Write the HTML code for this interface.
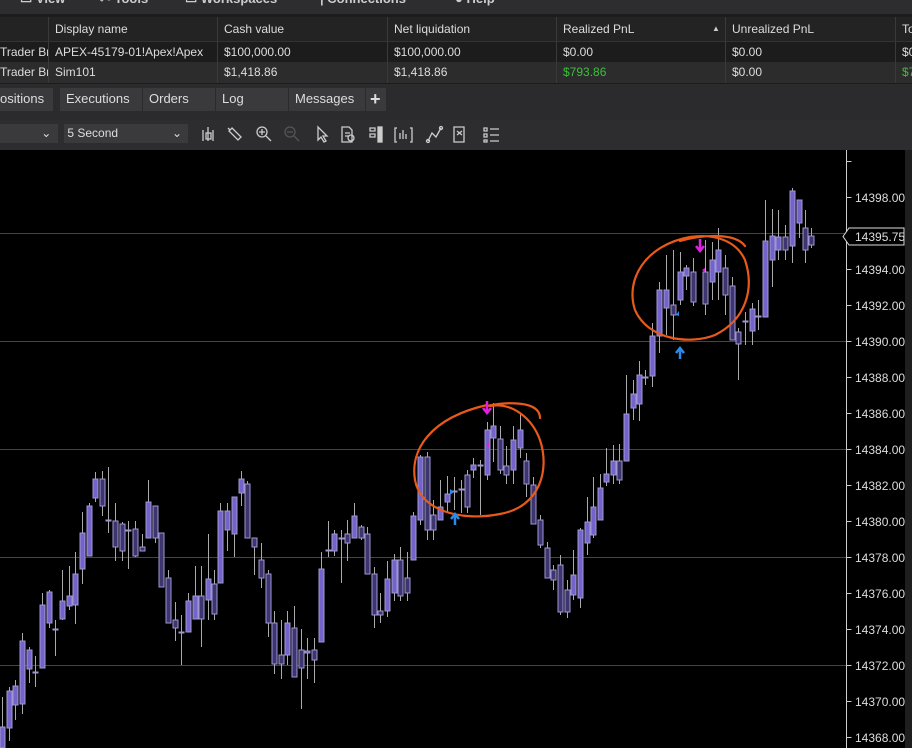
<!DOCTYPE html>
<html><head><meta charset="utf-8"><style>
body{margin:0;width:912px;height:748px;overflow:hidden;background:#000;font-family:"Liberation Sans",sans-serif;position:relative}
.a{position:absolute}
.menu{left:0;top:0;width:912px;height:14px;background:#2d2d30;overflow:hidden}
.menu span{position:absolute;top:-9px;font-size:13px;color:#ccc;font-weight:bold}
.tbl{left:0;top:14px;width:912px;height:70px;background:#1c1c1c}
.row{position:absolute;left:0;width:912px;height:21px;font-size:12px;color:#ddd;line-height:21px}
.row span{position:absolute;padding-left:6px;white-space:nowrap;overflow:hidden;border-left:1px solid #3a3a3a;height:100%}
.tabs{left:0;top:84px;width:912px;height:36px;background:#2b2b2d}
.tab{position:absolute;top:4px;height:23px;background:#3a3a3c;color:#ddd;font-size:13px;line-height:22px;padding-left:6px}
.tool{left:0;top:120px;width:912px;height:30px;background:#2d2d30}
</style></head><body>
<div class="a menu"><span style="left:20px">▭ View</span><span style="left:100px">✂ Tools</span><span style="left:185px">▭ Workspaces</span><span style="left:320px">| Connections</span><span style="left:455px">● Help</span></div>
<div class="a tbl">
 <div class="row" style="top:3px;height:24px;line-height:24px;background:#232323">
  <span style="left:48px;width:163px">Display name</span><span style="left:217px;width:163px">Cash value</span><span style="left:387px;width:163px">Net liquidation</span><span style="left:556px;width:163px">Realized PnL<b style="position:absolute;left:155px;font-size:8px;color:#ccc">▲</b></span><span style="left:725px;width:163px">Unrealized PnL</span><span style="left:895px;width:20px">To</span>
 </div>
 <div class="row" style="top:27px;border-top:1px solid #333">
  <span style="left:-6px;width:48px;border:0">Trader Br</span><span style="left:48px;width:163px">APEX-45179-01!Apex!Apex</span><span style="left:217px;width:163px">$100,000.00</span><span style="left:387px;width:163px">$100,000.00</span><span style="left:556px;width:163px">$0.00</span><span style="left:725px;width:163px">$0.00</span><span style="left:895px">$0</span>
 </div>
 <div class="row" style="top:48px;background:#2c2c2c">
  <span style="left:-6px;width:48px;border:0">Trader Br</span><span style="left:48px;width:163px">Sim101</span><span style="left:217px;width:163px">$1,418.86</span><span style="left:387px;width:163px">$1,418.86</span><span style="left:556px;width:163px;color:#3cbf3c">$793.86</span><span style="left:725px;width:163px">$0.00</span><span style="left:895px;color:#3cbf3c">$7</span>
 </div>
</div>
<div class="a tabs">
 <div class="tab" style="left:-6px;width:53px">ositions</div>
 <div class="tab" style="left:60px;width:76px">Executions</div>
 <div class="tab" style="left:143px;width:66px">Orders</div>
 <div class="tab" style="left:216px;width:66px">Log</div>
 <div class="tab" style="left:289px;width:70px">Messages</div>
 <div class="tab" style="left:366px;width:16px;padding-left:4px;font-size:18px;font-weight:bold">+</div>
</div>
<div class="a tool">
 <div class="a" style="left:0;top:4px;width:58px;height:19px;background:#3a3a3c;color:#ddd;font-size:12px;text-align:right;line-height:19px">⌄&nbsp;&nbsp;</div>
 <div class="a" style="left:64px;top:4px;width:124px;height:19px;background:#3a3a3c;color:#ddd;font-size:12px;line-height:19px">&nbsp;5 Second<span style="position:absolute;right:6px">⌄</span></div>
 <svg class="a" style="left:198px;top:4px" width="305" height="22" fill="none" stroke="#ccc" stroke-width="1.3">
  <path d="M5 6v11M10 3v14M15 6v11M8 9h5v6H8z" /><path d="M34 4l9 9-3 3-9-9zM32 6l-2-2" />
  <circle cx="64" cy="8" r="5"/><path d="M68 12l5 5M61 8h6M64 5v6"/>
  <g stroke="#555"><circle cx="92" cy="8" r="5"/><path d="M96 12l5 5M89 8h6"/></g>
  <path d="M120 3v13l3-3 3 5 2-1-3-5h4z"/>
  <path d="M144 3h7l3 3v12h-10z M147 9h5M147 12h4"/><circle cx="153" cy="14" r="3"/>
  <path d="M172 4h5v3h-5zM172 10h5v3h-5z"/><rect x="180" y="3" width="4" height="15" fill="#ccc"/>
  <path d="M199 4h-2v14h2M212 4h2v14h-2M202 15v-6M205 15v-9M208 15v-5"/>
  <path d="M230 17l4-8 4 4 5-9" /><circle cx="230" cy="17" r="1.5"/><circle cx="243" cy="4" r="1.5"/>
  <path d="M256 3h10v15h-10zM259 7l5 4M264 7l-5 4"/>
  <path d="M286 4h3v3h-3zM286 10h3v3h-3zM286 16h3v2h-3zM292 5h9M292 11h9M292 17h9"/>
 </svg>
</div>
<div class="a" style="left:905px;top:150px;width:7px;height:598px;background:#1e1e1e"></div>
<svg class="a" style="left:0;top:150px" width="905" height="598" id="ch">
 <g stroke="#444" stroke-width="1">
  <path d="M0 83.5H846M0 191.5H846M0 299.5H846M0 407.5H846M0 515.5H846"/>
 </g>
 <path d="M846.5 0V598" stroke="#ccc"/>
 <g id="cs"></g>
 <g fill="none" stroke="#e85a1a" stroke-width="2.2" stroke-linecap="round">
  <path d="M487 256 C505 252 540 250 540 268 M487 255 C430 268 410 300 415 330 C420 360 460 372 500 364 C540 357 550 320 540 290 C532 268 512 252 490 256"/>
  <path d="M680 91 C700 85 735 82 745 96 M690 87 C645 95 625 130 635 160 C648 190 690 195 715 185 C745 170 755 140 745 110 C735 88 710 84 690 87"/>
 </g>
 <path d="M487 251v10M483 258l4 5 4-5" stroke="#e020e0" stroke-width="2.5" fill="none"/>
 <path d="M700 89v10M696 96l4 5 4-5" stroke="#e020e0" stroke-width="2.5" fill="none"/>
 <path d="M455 375v-9M451 369l4-5 4 5" stroke="#2a8ce8" stroke-width="2.5" fill="none"/>
 <path d="M680 209v-9M676 203l4-5 4 5" stroke="#2a8ce8" stroke-width="2.5" fill="none"/>
 <path d="M450 345l4-3-4-3z M676 165l3-4v5z" fill="#2a8ce8"/>
 <path d="M489 297l-3-2 3-2z M705 118l-3 2 3 2z" fill="#e020e0"/>
 <g font-size="12" fill="#ddd" font-family="Liberation Sans,sans-serif">
  <path d="M846.5 11.5h5M846.5 47.5h5M846.5 119.5h5M846.5 155.5h5M846.5 191.5h5M846.5 227.5h5M846.5 263.5h5M846.5 299.5h5M846.5 335.5h5M846.5 371.5h5M846.5 407.5h5M846.5 443.5h5M846.5 479.5h5M846.5 515.5h5M846.5 551.5h5M846.5 587.5h5" stroke="#ccc"/>
  <text x="855" y="52">14398.00</text><text x="855" y="124">14394.00</text><text x="855" y="160">14392.00</text><text x="855" y="196">14390.00</text><text x="855" y="232">14388.00</text><text x="855" y="268">14386.00</text><text x="855" y="304">14384.00</text><text x="855" y="340">14382.00</text><text x="855" y="376">14380.00</text><text x="855" y="412">14378.00</text><text x="855" y="448">14376.00</text><text x="855" y="484">14374.00</text><text x="855" y="520">14372.00</text><text x="855" y="556">14370.00</text><text x="855" y="592">14368.00</text>
  <path d="M843 86.5l6-8.5h55v17h-55z" fill="#000" stroke="#ddd"/>
  <text x="855" y="91">14395.75</text>
 </g>
</svg>
<script>
var d=[[2,697,748,727,748],[9,687,741,691,728],[15,680,720,686,705],[22,633,714,641,704],[29,647,683,650,669],[35,656,687,672,673],[42,593,668,605,668],[49,590,628,592,623],[55,620,656,629,630],[62,570,620,601,619],[69,566,610,596,606],[75,552,624,574,605],[82,512,584,533,569],[89,503,556,506,556],[95,472,502,479,498],[102,471,516,479,506],[108,467,533,520,521],[115,503,561,521,547],[122,522,561,524,551],[128,521,569,530,531],[135,521,557,529,556],[142,534,551,547,551],[148,480,538,502,538],[155,506,543,506,538],[161,533,587,533,587],[168,570,623,578,623],[175,602,641,620,628],[181,615,665,632,633],[188,593,632,601,632],[195,566,617,596,619],[201,566,647,596,619],[208,534,620,579,600],[214,570,620,584,614],[220,503,583,511,583],[227,503,551,511,530],[234,503,557,497,534],[241,471,506,479,493],[247,481,538,484,538],[254,538,575,538,547],[261,543,588,560,578],[268,570,637,574,623],[274,611,674,623,664],[281,620,679,655,664],[287,611,665,623,655],[294,606,677,628,677],[301,629,709,650,668],[307,638,679,651,653],[314,638,683,650,660],[321,552,642,569,642],[328,521,557,550,551],[334,530,556,534,551],[341,530,583,538,539],[347,520,561,534,543],[354,503,538,516,538],[361,525,540,527,538],[367,527,574,534,574],[374,567,628,574,615],[380,593,623,611,615],[387,561,617,579,611],[394,554,601,560,593],[400,547,601,560,596],[407,552,601,578,593],[413,512,560,516,560],[420,455,525,457,520],[427,452,540,457,530],[433,500,540,515,530],[440,480,520,507,520],[447,476,512,494,502],[454,477,510,491,492],[461,480,513,489,490],[467,470,513,475,507],[473,458,478,465,470],[480,460,515,465,466],[487,422,480,430,475],[493,403,462,426,438],[500,426,474,439,470],[506,446,484,466,475],[513,426,484,440,470],[520,414,458,430,448],[526,453,497,461,484],[533,477,524,485,524],[540,515,548,520,545],[547,542,578,548,578],[553,565,590,570,580],[560,555,615,565,612],[567,580,618,590,612],[573,550,600,575,595],[580,528,608,530,598],[587,497,555,522,543],[593,477,538,507,535],[600,474,520,488,520],[606,448,486,474,482],[613,445,484,461,475],[619,444,484,461,480],[626,375,460,414,461],[633,380,420,394,408],[639,361,421,375,404],[645,370,385,377,378],[652,323,387,336,376],[659,282,353,290,336],[666,255,335,290,308],[673,250,340,305,315],[680,252,305,272,300],[686,265,290,268,276],[693,258,306,272,302],[705,240,315,272,304],[712,242,300,260,282],[718,228,300,250,272],[725,255,315,268,295],[732,277,340,286,340],[738,328,380,332,344],[745,312,345,321,322],[752,303,345,309,331],[758,300,330,316,317],[765,200,317,241,317],[772,209,287,236,260],[778,210,260,237,250],[785,225,260,237,250],[792,188,263,191,246],[799,200,238,200,223],[805,210,263,228,250],[811,228,248,236,245]];
var s='',pc=1e9;
d.forEach(function(c){var x=c[0],y0=150;var t=c[3]-y0,b=c[4]-y0,h=c[1]-y0,l=c[2]-y0;var mid=(t+b)/2;var up=mid<pc;pc=mid;
s+='<line x1="'+(x+.5)+'" x2="'+(x+.5)+'" y1="'+h+'" y2="'+l+'" stroke="#aaa" stroke-width="1"/>';
var hh=Math.max(b-t,1);s+='<rect x="'+(x-2)+'" y="'+t+'" width="5" height="'+hh+'" fill="'+(up?'#7563cc':'#3c3570')+'" stroke="#9f98cf" stroke-width="1"/>';});
document.getElementById('cs').innerHTML=s;
</script>
</body></html>
